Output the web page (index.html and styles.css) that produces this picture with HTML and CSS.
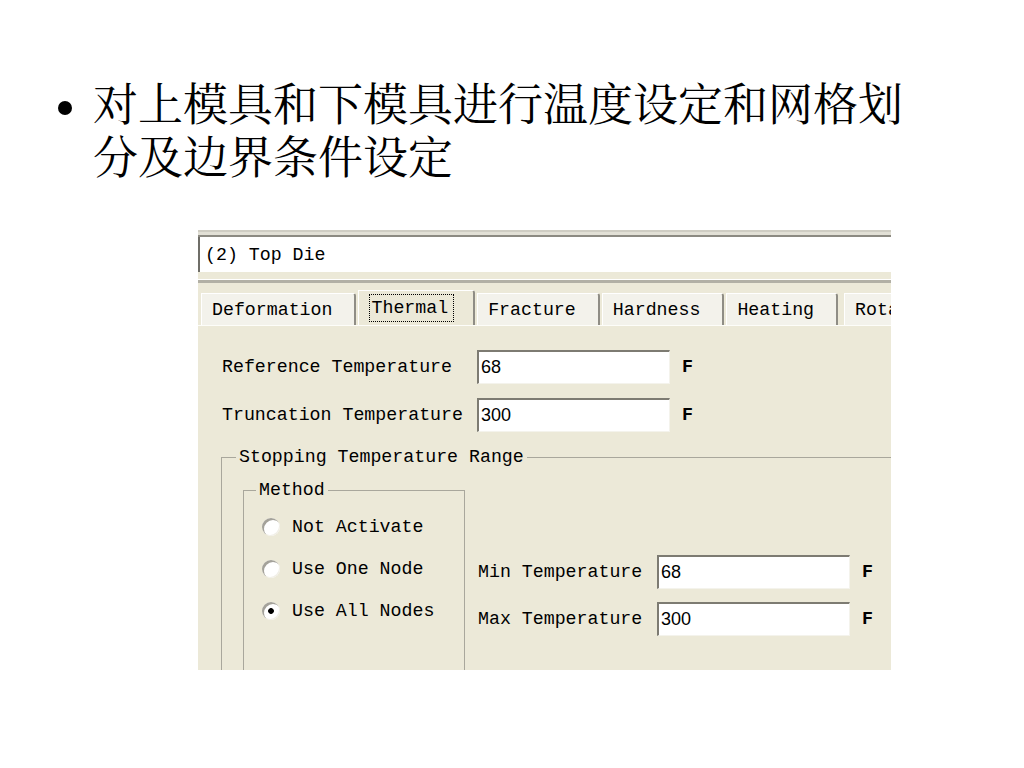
FILE: index.html
```html
<!DOCTYPE html>
<html lang="zh-CN">
<head>
<meta charset="utf-8">
<title>温度设定</title>
<link rel="stylesheet" href="styles.css">
</head>
<body>
<div class="slide">
  <div class="point">
    <span class="bullet"></span>
    <p class="point-text">对上模具和下模具进行温度设定和网格划分及边界条件设定</p>
  </div>

  <div class="dialog">
    <div class="frame-top"></div>
    <div class="namefield">(2) Top Die</div>
    <div class="sep"></div>
    <div class="tabs">
      <div class="tab">Deformation</div>
      <div class="tab active"><span class="focus">Thermal</span></div>
      <div class="tab">Fracture</div>
      <div class="tab">Hardness</div>
      <div class="tab">Heating</div>
      <div class="tab last">Rotation</div>
    </div>
    <div class="panel">
      <div class="row">
        <span class="lbl">Reference Temperature</span>
        <span class="input">68</span>
        <span class="unit">F</span>
      </div>
      <div class="row">
        <span class="lbl">Truncation Temperature</span>
        <span class="input">300</span>
        <span class="unit">F</span>
      </div>

      <fieldset class="group stopping">
        <legend>Stopping Temperature Range</legend>
        <div class="group-body">
          <fieldset class="group method">
            <legend>Method</legend>
            <div class="radio"><span class="circle"></span>Not Activate</div>
            <div class="radio"><span class="circle"></span>Use One Node</div>
            <div class="radio"><span class="circle checked"></span>Use All Nodes</div>
          </fieldset>
          <div class="limits">
            <div class="row">
              <span class="lbl short">Min Temperature</span>
              <span class="input">68</span>
              <span class="unit">F</span>
            </div>
            <div class="row">
              <span class="lbl short">Max Temperature</span>
              <span class="input">300</span>
              <span class="unit">F</span>
            </div>
          </div>
        </div>
      </fieldset>
    </div>
  </div>
</div>
</body>
</html>
```

FILE: styles.css
```css
* { box-sizing: border-box; }

html, body {
  margin: 0;
  padding: 0;
  background: #fff;
}

body {
  width: 1024px;
  height: 768px;
  overflow: hidden;
}

.slide {
  padding-top: 75px;
}

.point {
  display: flex;
  align-items: flex-start;
  margin-left: 58px;
}

.bullet {
  flex: none;
  width: 14px;
  height: 14px;
  border-radius: 50%;
  background: #000;
  margin-top: 26px;
  margin-right: 21px;
}

.point-text {
  margin: 0;
  width: 820px;
  font-family: "Noto Serif CJK SC", "Noto Sans CJK SC", serif;
  font-size: 45px;
  line-height: 53px;
  color: #000;
}

.dialog {
  margin: 49px 0 0 198px;
  width: 693px;
  height: 440px;
  overflow: hidden;
  background: #ece9d8;
  font-family: "Liberation Mono", monospace;
  font-size: 18.25px;
  color: #000;
}

.frame-top {
  height: 7px;
  border-top: 2px solid #cfcdc3;
  border-bottom: 2px solid #8c8a82;
  background: #e2e0d6;
}

.namefield {
  height: 35px;
  line-height: 37px;
  background: #fff;
  border-left: 2px solid #6f6e68;
  padding-left: 5px;
  white-space: nowrap;
}

.sep {
  height: 11px;
  border-bottom: 3px solid #b2b0a5;
  box-shadow: inset 0 -1px 0 #fff;
}

.tabs {
  height: 42px;
  display: flex;
  align-items: flex-end;
  gap: 2px;
  padding-left: 3px;
  white-space: nowrap;
}

.tab {
  flex: none;
  height: 32px;
  display: flex;
  align-items: center;
  padding: 0 22px 0 10px;
  background: #f3f2eb;
  border-top: 1px solid #fff;
  border-left: 1px solid #fff;
  border-right: 2px solid #8f8d85;
  border-top-right-radius: 3px;
}

.tab.last {
  margin-left: 4px;
}

.tab.active {
  height: 35px;
  padding: 0 19px 0 10px;
  background: #ece9d8;
}

.focus {
  display: inline-block;
  line-height: 24px;
  padding: 1px 5px 1px 1px;
  border: 1px dotted #000;
}

.panel {
  height: 400px;
  padding: 24px 0 0 24px;
  border-top: 1px solid #fdfdf9;
}

.row {
  display: flex;
  align-items: center;
  height: 34px;
  white-space: nowrap;
}

.row + .row {
  margin-top: 14px;
}

.lbl {
  flex: none;
  width: 255px;
}

.lbl.short {
  width: 179px;
}

.input {
  flex: none;
  width: 193px;
  height: 34px;
  line-height: 31px;
  padding-left: 2px;
  background: #fff;
  border-top: 2px solid #7d7b72;
  border-left: 2px solid #7d7b72;
  border-right: 1px solid #f4f3ec;
  border-bottom: 1px solid #f4f3ec;
  font-family: "Liberation Sans", Arial, sans-serif;
  font-size: 18px;
}

.unit {
  margin-left: 12px;
  font-weight: bold;
}

.group {
  margin: 0;
  padding: 0;
  border: 1px solid #a9a79c;
  min-width: 0;
}

.group legend {
  padding: 0 3px;
  line-height: 22px;
  white-space: nowrap;
}

.stopping {
  margin: 14px 0 0 -1px;
  width: 700px;
  height: 320px;
}

.stopping > legend {
  margin-left: 14px;
}

.group-body {
  display: flex;
  align-items: flex-start;
}

.method {
  flex: none;
  margin: 11px 0 0 21px;
  width: 222px;
  height: 260px;
  padding-top: 5px;
}

.method > legend {
  margin-left: 12px;
}

.radio {
  display: flex;
  align-items: center;
  height: 42px;
  padding-left: 18px;
  white-space: nowrap;
}

.circle {
  flex: none;
  width: 18px;
  height: 18px;
  margin-right: 12px;
  border-radius: 50%;
  background: #fff;
  box-shadow: inset 2px 2px 0 #a4a29a, inset -1px -1px 0 #f1efe7;
}

.circle.checked {
  background: radial-gradient(circle, #000 0, #000 2.5px, #fff 3.2px);
}

.limits {
  margin: 87px 0 0 13px;
}

.limits .row + .row {
  margin-top: 13px;
}
```
